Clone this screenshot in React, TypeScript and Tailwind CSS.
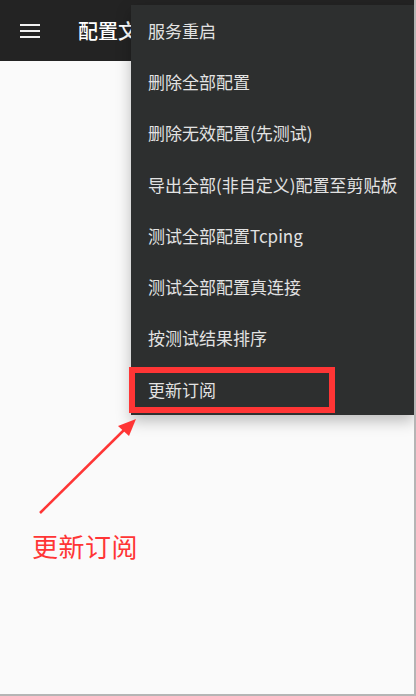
import React from "react";

const items = [
  "服务重启",
  "删除全部配置",
  "删除无效配置(先测试)",
  "导出全部(非自定义)配置至剪贴板",
  "测试全部配置Tcping",
  "测试全部配置真连接",
  "按测试结果排序",
  "更新订阅",
];

export default function App() {
  return (
    <div
      className="relative w-[416px] h-[696px] overflow-hidden bg-[#fafafa] border-r-2 border-b-2 border-[#b5b5b5]"
      style={{ fontFamily: '"Noto Sans CJK SC", "Noto Sans", sans-serif' }}
    >
      <div className="h-[61px] bg-[#232323] flex items-center">
        <div className="ml-[20px] w-[20px] flex flex-col gap-[4px]">
          <div className="h-[2px] bg-[#f0f0f0]" />
          <div className="h-[2px] bg-[#f0f0f0]" />
          <div className="h-[2px] bg-[#f0f0f0]" />
        </div>
        <div className="ml-[38px] text-[20px] font-medium text-white leading-none">配置文件</div>
      </div>

      <div className="absolute left-[131px] top-[5px] w-[283px] bg-[#2d2f2f] shadow-[0_6px_14px_rgba(0,0,0,0.25)]">
        {items.map((t) => (
          <div key={t} className="h-[51.25px] flex items-center pl-[17px] text-[17px] text-[#e2e2e2]">
            {t}
          </div>
        ))}
      </div>

      <div className="absolute left-[129px] top-[367px] w-[206px] h-[46px] border-[6px] border-[#ff3535]" />

      <svg className="absolute left-0 top-0" width="416" height="696" viewBox="0 0 416 696">
        <line x1="40" y1="513" x2="124" y2="430" stroke="#ff3535" strokeWidth="2.5" />
        <polygon points="136,419 118,426 129,436" fill="#ff3535" />
      </svg>

      <div className="absolute left-[32px] top-[533px] text-[26px] text-[#ff3535] leading-none tracking-[0.5px]">
        更新订阅
      </div>
    </div>
  );
}
